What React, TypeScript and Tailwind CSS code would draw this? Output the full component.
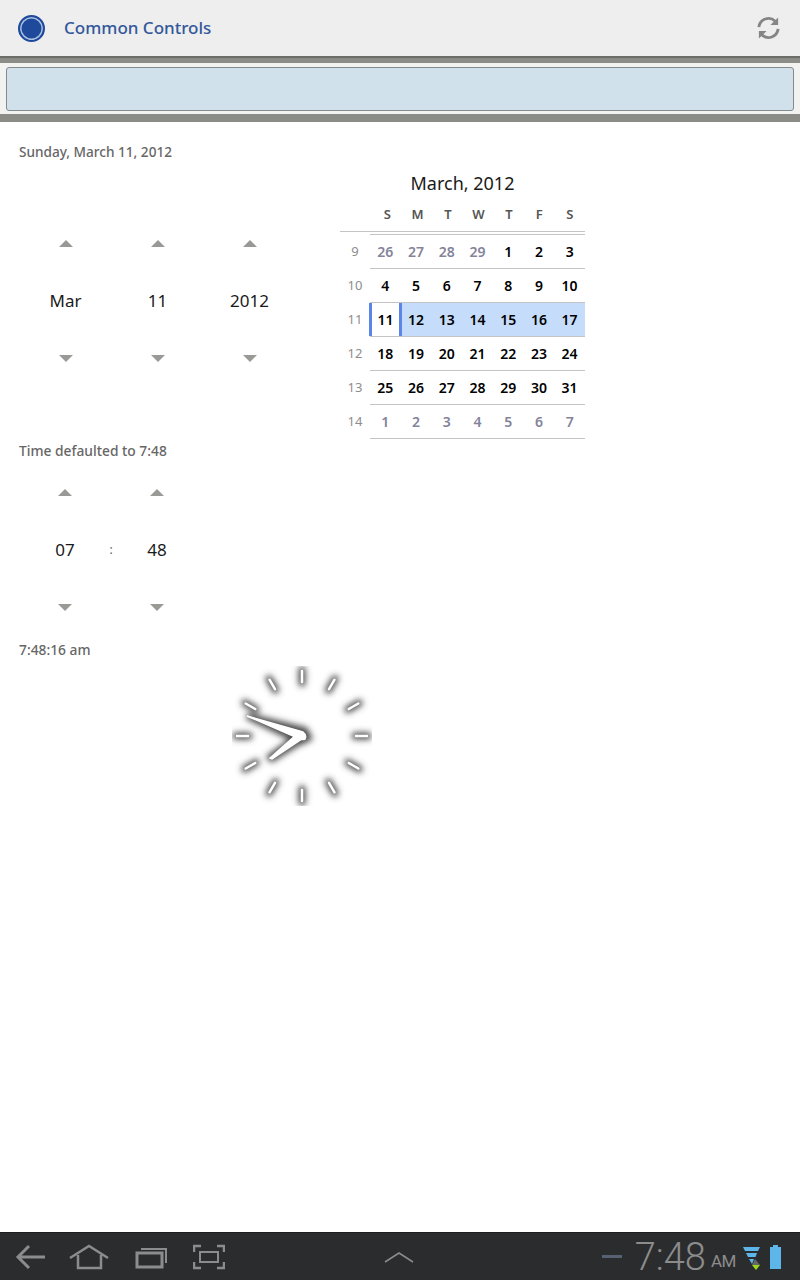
const font = { fontFamily: '"Noto Sans", sans-serif' }

const weeks: Array<[number, Array<[number, boolean]>]> = [
    [9, [[26, true], [27, true], [28, true], [29, true], [1, false], [2, false], [3, false]]],
    [10, [[4, false], [5, false], [6, false], [7, false], [8, false], [9, false], [10, false]]],
    [11, [[11, false], [12, false], [13, false], [14, false], [15, false], [16, false], [17, false]]],
    [12, [[18, false], [19, false], [20, false], [21, false], [22, false], [23, false], [24, false]]],
    [13, [[25, false], [26, false], [27, false], [28, false], [29, false], [30, false], [31, false]]],
    [14, [[1, true], [2, true], [3, true], [4, true], [5, true], [6, true], [7, true]]]
]

function Arrow({ down }: { down?: boolean }) {
    return (
        <svg width="16" height="10" viewBox="0 0 16 10">
            <path d={down ? 'M1 2 H15 L8 9 Z' : 'M8 1 L15 8 H1 Z'} fill="#999996" />
        </svg>
    )
}

function Spinner({ value, width }: { value: string; width: string }) {
    return (
        <div className={`flex flex-col items-center ${width}`}>
            <div className="h-[10px] mt-[1px] flex items-center">
                <Arrow />
            </div>
            <div className="h-[104px] flex items-center text-[17px] text-[#1a1a1a]">{value}</div>
            <div className="h-[10px] flex items-center">
                <Arrow down />
            </div>
        </div>
    )
}

function Calendar() {
    return (
        <div className="w-[245px] shrink-0 ml-[19px]">
            <div className="h-[31px] flex items-center justify-center text-[18px] text-[#1a1a1a] mt-[46px]">
                March, 2012
            </div>
            <div className="flex h-[33px] items-center border-b border-[#c4c4c4]">
                <div className="w-[30px]"></div>
                <div className="grid grid-cols-7 flex-1 text-center text-[13px] font-semibold text-[#555555] pl-[2px]">
                    {['S', 'M', 'T', 'W', 'T', 'F', 'S'].map((d, i) => (
                        <span key={i}>{d}</span>
                    ))}
                </div>
            </div>
            <div className="ml-[30px] h-[3px] border-b border-[#c4c4c4]"></div>
            {weeks.map(([week, days]) => (
                <div className="flex h-[34px]" key={week}>
                    <div className="w-[30px] flex items-center justify-center text-[13px] text-[#8d8d8d]">
                        {week}
                    </div>
                    <div
                        className={`grid grid-cols-7 flex-1 items-center text-center text-[14px] font-semibold border-b border-[#c4c4c4] ${
                            week == 11 ? 'bg-[#c6dcfb]' : ''
                        }`}
                    >
                        {days.map(([day, muted], i) =>
                            week == 11 && i == 0 ? (
                                <span
                                    key={i}
                                    className="h-full w-[33px] flex items-center justify-center bg-white border-x-[3px] border-[#5b86e8] text-black -ml-[1px]"
                                >
                                    {day}
                                </span>
                            ) : (
                                <span key={i} className={muted ? 'text-[#83839a]' : 'text-black'}>
                                    {day}
                                </span>
                            )
                        )}
                    </div>
                </div>
            ))}
        </div>
    )
}

function Clock() {
    const ticks = Array.from({ length: 12 }).map((_, i) => i * 30)
    return (
        <svg width="140" height="140" viewBox="0 0 140 140">
            <defs>
                <filter id="glow" x="-50%" y="-50%" width="200%" height="200%">
                    <feGaussianBlur stdDeviation="3.4" />
                </filter>
            </defs>
            <g filter="url(#glow)" stroke="#4a4a4a" fill="#4a4a4a" strokeLinecap="round">
                {ticks.map((a) => (
                    <line key={a} x1="70" y1="4" x2="70" y2="17" strokeWidth="7" transform={`rotate(${a} 70 70)`} />
                ))}
                <path d="M15 50 L73 64 L77 72 L69 76 Z" strokeWidth="6" />
                <path d="M38 91 L68 69 L72 73 L40 93 Z" strokeWidth="6" />
            </g>
            <g stroke="#ffffff" fill="#ffffff" strokeLinecap="round">
                {ticks.map((a) => (
                    <line key={a} x1="70" y1="5" x2="70" y2="16" strokeWidth="2.5" transform={`rotate(${a} 70 70)`} />
                ))}
                <path d="M15 50 L71 66 Q75 69 73 73 Q71 74 68 73 Z" strokeWidth="1.5" />
                <path d="M38 92 L63 70 L70 73 L40 93 Z" strokeWidth="1.5" />
            </g>
        </svg>
    )
}

function NavBar() {
    return (
        <div className="h-[48px] shrink-0 bg-[#2b2c2e] border-t border-[#1e1e1e] flex items-center relative">
            <svg className="ml-[15px]" width="32" height="28" viewBox="0 0 32 28" fill="none" stroke="#8c8c8c" strokeWidth="3">
                <path d="M14 3 L3 14 L14 25 M3 14 H30" />
            </svg>
            <svg className="ml-[22px]" width="42" height="28" viewBox="0 0 42 28" fill="none" stroke="#8c8c8c" strokeWidth="2.5">
                <path d="M1 15 L20 3 L39 15 M9 12 V25 H32 V12" />
            </svg>
            <svg className="ml-[24px]" width="34" height="26" viewBox="0 0 34 26" fill="none" stroke="#8c8c8c">
                <rect x="2" y="9" width="25" height="14" strokeWidth="3" />
                <path d="M6 5 H31 V19" strokeWidth="2" />
            </svg>
            <svg className="ml-[24px]" width="32" height="26" viewBox="0 0 32 26" fill="none" stroke="#8c8c8c" strokeWidth="2.5">
                <path d="M1 8 V2 H8 M24 2 H31 V8 M1 18 V24 H8 M24 24 H31 V18" />
                <rect x="7" y="8" width="18" height="10" strokeWidth="2" />
            </svg>
            <svg className="ml-[159px]" width="30" height="12" viewBox="0 0 30 12" fill="none" stroke="#8c8c8c" strokeWidth="1.5">
                <path d="M1 11 L15 2 L29 11" />
            </svg>
            <div className="ml-auto flex items-center">
                <div className="w-[20px] h-[3px] bg-[#566273] mr-[13px]"></div>
                <span className="text-[38px] font-light text-[#8c8c8c] leading-none" style={{ fontFamily: 'Roboto, sans-serif' }}>
                    7:48
                </span>
                <span className="text-[17px] text-[#8c8c8c] ml-[5px] mt-[10px] tracking-tight" style={{ fontFamily: 'Roboto, sans-serif' }}>
                    AM
                </span>
                <svg className="ml-[6px]" width="20" height="26" viewBox="0 0 20 26">
                    <path d="M1 3 H18 L16 7 H3 Z M4 9 H15 L13.5 13 H6 Z M7 15 H12 L10 20 Z" fill="#5cb6ea" />
                    <path d="M13 15 L18 21 H10 Z" fill="#666666" />
                    <path d="M10 21 H18 L14 26 Z" fill="#9bd81c" />
                </svg>
                <svg className="ml-[8px] mr-[19px]" width="11" height="24" viewBox="0 0 11 24">
                    <path d="M3 0 H8 V2 H11 V24 H0 V2 H3 Z" fill="#5cb6ea" />
                </svg>
            </div>
        </div>
    )
}

export default function App() {
    return (
        <div className="w-[800px] h-[1280px] flex flex-col bg-white overflow-hidden" style={font}>
            <div className="h-[56px] shrink-0 bg-[#eeeeee] flex items-center pl-[18px] pr-[19px]">
                <div className="w-[27px] h-[27px] rounded-full bg-[#1f4a9c] border-[2px] border-[#1f4a9c] shadow-[inset_0_0_0_1.5px_#a9bfe0]"></div>
                <span className="ml-[19px] text-[17px] font-medium text-[#32589b]">Common Controls</span>
                <svg className="ml-auto" width="25" height="26" viewBox="0 0 26 26" fill="none" stroke="#858585" strokeWidth="3">
                    <path d="M3 12 A10 10 0 0 1 20 6" />
                    <path d="M23 14 A10 10 0 0 1 6 20" />
                    <path d="M23 2 V10 H15 Z" fill="#858585" stroke="none" />
                    <path d="M3 24 V16 H11 Z" fill="#858585" stroke="none" />
                </svg>
            </div>
            <div className="h-[2px] shrink-0 bg-[#6c6c69]"></div>
            <div className="h-[5px] shrink-0 bg-[#8b8b88]"></div>
            <div className="shrink-0 h-[51px] bg-[#f2f2f0] px-[6px] pt-[4px] pb-[3px] flex">
                <div className="flex-1 bg-[#d1e1ec] border-[1.5px] border-[#858a8c] rounded-[3px]"></div>
            </div>
            <div className="h-[8px] shrink-0 bg-[#8b8b88]"></div>

            <div className="flex-1 flex flex-col pl-[19px]">
                <div className="flex">
                    <div className="w-[302px] shrink-0">
                        <div className="text-[13.6px] font-medium text-[#666666] mt-[21px] h-[18px] leading-[18px]">
                            Sunday, March 11, 2012
                        </div>
                        <div className="flex mt-[77px]">
                            <Spinner value="Mar" width="w-[93px]" />
                            <Spinner value="11" width="w-[91px]" />
                            <Spinner value="2012" width="w-[93px]" />
                        </div>
                        <div className="text-[13.8px] font-medium text-[#666666] mt-[79px] h-[18px] leading-[18px]">
                            Time defaulted to 7:48
                        </div>
                        <div className="flex mt-[27px] items-center">
                            <Spinner value="07" width="ml-[6px] w-[80px]" />
                            <div className="w-[12px] text-center text-[12px] text-[#666666]">:</div>
                            <Spinner value="48" width="w-[80px]" />
                        </div>
                    </div>
                    <Calendar />
                </div>
                <div className="text-[13.8px] font-medium text-[#666666] mt-[29px] h-[18px] leading-[18px]">7:48:16 am</div>
                <div className="ml-[213px] mt-[7px]">
                    <Clock />
                </div>
            </div>
            <NavBar />
        </div>
    )
}
